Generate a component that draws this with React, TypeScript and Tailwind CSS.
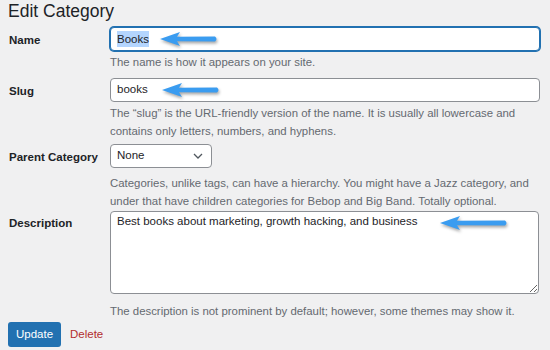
import React from 'react';

const Arrow: React.FC<{ className?: string; width?: number }> = ({ className, width = 60 }) => (
  <svg
    className={className}
    width={width}
    height={18}
    viewBox={`0 0 ${width} 18`}
    style={{ filter: 'drop-shadow(1px 2px 1.5px rgba(0,0,0,0.35))' }}
  >
    <path
      d={`M1 9 L21 2 L18 6.8 L${width - 4} 6.6 Q${width - 1} 9 ${width - 4} 11.4 L18 11.2 L21 16 Z`}
      fill="#3a9cf0"
    />
  </svg>
);

const Help: React.FC<{ children: React.ReactNode }> = ({ children }) => (
  <p className="text-[11.4px] leading-[18px] text-[#646970]">{children}</p>
);

export default function App() {
  return (
    <div
      className="w-[550px] h-[350px] overflow-hidden bg-[#f0f0f1] text-[#1d2327] pl-[8px]"
      style={{ fontFamily: '"Liberation Sans", Arial, sans-serif' }}
    >
      <h1 className="text-[17.5px] leading-[20px] pt-[1px] font-normal">Edit Category</h1>

      {/* Name */}
      <div className="grid grid-cols-[102px_430px] mt-[6px]">
        <label className="text-[11.5px] font-bold self-start mt-[5px] pl-[1px]">Name</label>
        <div>
          <div className="relative h-[24px] rounded-[4px] border border-[#2271b1] shadow-[0_0_0_1px_#2271b1] bg-white flex items-center px-[6px]">
            <span className="text-[11.5px] bg-[#b4d5fe] leading-[16px]">Books</span>
            <Arrow className="absolute left-[48px] top-[2px]" />
          </div>
          <div className="mt-[2px]">
            <Help>The name is how it appears on your site.</Help>
          </div>
        </div>
      </div>

      {/* Slug */}
      <div className="grid grid-cols-[102px_430px] mt-[7px]">
        <label className="text-[11.5px] font-bold self-start mt-[5px] pl-[1px]">Slug</label>
        <div>
          <div className="relative h-[24px] rounded-[4px] border border-[#8c8f94] bg-white flex items-center px-[6px]">
            <span className="text-[11.5px]">books</span>
            <Arrow className="absolute left-[50px] top-[2px]" />
          </div>
          <div className="mt-[2px]">
            <Help>
              The “slug” is the URL-friendly version of the name. It is usually all lowercase and
              <br />
              contains only letters, numbers, and hyphens.
            </Help>
          </div>
        </div>
      </div>

      {/* Parent */}
      <div className="grid grid-cols-[102px_430px] mt-[4px]">
        <label className="text-[11.5px] font-bold self-start mt-[5px] pl-[1px]">Parent Category</label>
        <div>
          <div className="w-[102px] h-[24px] rounded-[4px] border border-[#8c8f94] bg-white flex items-center justify-between pl-[6px] pr-[8px]">
            <span className="text-[11.5px]">None</span>
            <svg width="10" height="6" viewBox="0 0 10 6" fill="none">
              <path d="M1 1 L5 5 L9 1" stroke="#50575e" strokeWidth="1.3" />
            </svg>
          </div>
          <div className="mt-[6px]">
            <Help>
              Categories, unlike tags, can have a hierarchy. You might have a Jazz category, and
              <br />
              under that have children categories for Bebop and Big Band. Totally optional.
            </Help>
          </div>
        </div>
      </div>

      {/* Description */}
      <div className="grid grid-cols-[102px_430px] mt-[1px]">
        <label className="text-[11.5px] font-bold self-start mt-[4px] pl-[1px]">Description</label>
        <div>
          <div className="relative">
            <textarea
              readOnly
              defaultValue="Best books about marketing, growth hacking, and business"
              className="block w-[429px] h-[83px] rounded-[4px] border border-[#8c8f94] bg-white px-[6px] py-0 text-[11.5px] leading-[18px] text-[#1d2327] outline-none"
            />
            <Arrow className="absolute left-[329px] top-[3px]" width={70} />
          </div>
          <div className="mt-[8px]">
            <Help>The description is not prominent by default; however, some themes may show it.</Help>
          </div>
        </div>
      </div>

      {/* Actions */}
      <div className="flex items-center gap-[9px] mt-[2px]">
        <button className="h-[25px] w-[53px] rounded-[3px] bg-[#2271b1] text-white text-[11.5px]">Update</button>
        <a className="text-[11.5px] text-[#b32d2e]">Delete</a>
      </div>
    </div>
  );
}
